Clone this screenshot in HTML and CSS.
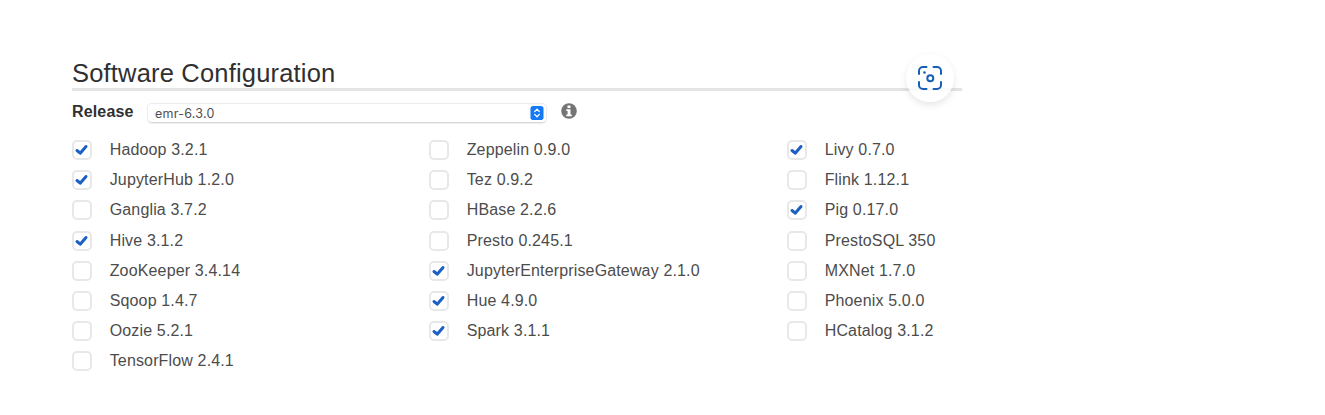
FILE: index.html
```html
<!DOCTYPE html>
<html lang="en">
<head>
<meta charset="utf-8">
<title>Software Configuration</title>
<link rel="stylesheet" href="styles.css">
</head>
<body>
<main class="panel">
  <h1 class="title">Software Configuration</h1>
  <button class="capture" aria-label="Visual search">
    <svg width="26" height="26" viewBox="0 0 26 26" fill="none" stroke="#1560b4" stroke-width="2" stroke-linecap="round">
      <path d="M9.500 2H6M2 9V6a4 4 0 0 1 4-4M16.500 2H20a4 4 0 0 1 4 4v3M24 17v3a4 4 0 0 1-4 4h-3.500M9.500 24H6a4 4 0 0 1-4-4v-3"/>
      <circle cx="13.300" cy="13.300" r="3"/>
      <circle cx="7.500" cy="7.500" r="1.300" fill="#1560b4" stroke="none"/>
    </svg>
  </button>
  <div class="release">
    <span class="release-label">Release</span>
    <div class="select">
      <span>emr-6.3.0</span>
      <svg class="stepper" width="14" height="14" viewBox="0 0 14 15">
        <rect width="14" height="15" rx="3" fill="#1579f5"/>
        <path d="M4.500 6 7 3.500 9.500 6M4.500 9 7 11.500 9.500 9" fill="none" stroke="#fff" stroke-width="1.400" stroke-linecap="round" stroke-linejoin="round"/>
      </svg>
    </div>
    <svg class="info" width="16" height="16" viewBox="0 0 16 16">
      <circle cx="8" cy="8" r="7.800" fill="#747474"/>
      <path d="M6.500 2.500h3v2.400h-3zM5.300 6.200h4.200v5.200h1.300v1.900H5.300v-1.900h1.300V8.100H5.300z" fill="#fff"/>
    </svg>
  </div>
  <div class="apps">
    <div class="column">
      <label class="app"><span class="box checked"></span>Hadoop 3.2.1</label>
      <label class="app"><span class="box checked"></span>JupyterHub 1.2.0</label>
      <label class="app"><span class="box"></span>Ganglia 3.7.2</label>
      <label class="app"><span class="box checked"></span>Hive 3.1.2</label>
      <label class="app"><span class="box"></span>ZooKeeper 3.4.14</label>
      <label class="app"><span class="box"></span>Sqoop 1.4.7</label>
      <label class="app"><span class="box"></span>Oozie 5.2.1</label>
      <label class="app"><span class="box"></span>TensorFlow 2.4.1</label>
    </div>
    <div class="column">
      <label class="app"><span class="box"></span>Zeppelin 0.9.0</label>
      <label class="app"><span class="box"></span>Tez 0.9.2</label>
      <label class="app"><span class="box"></span>HBase 2.2.6</label>
      <label class="app"><span class="box"></span>Presto 0.245.1</label>
      <label class="app"><span class="box checked"></span>JupyterEnterpriseGateway 2.1.0</label>
      <label class="app"><span class="box checked"></span>Hue 4.9.0</label>
      <label class="app"><span class="box checked"></span>Spark 3.1.1</label>
    </div>
    <div class="column">
      <label class="app"><span class="box checked"></span>Livy 0.7.0</label>
      <label class="app"><span class="box"></span>Flink 1.12.1</label>
      <label class="app"><span class="box checked"></span>Pig 0.17.0</label>
      <label class="app"><span class="box"></span>PrestoSQL 350</label>
      <label class="app"><span class="box"></span>MXNet 1.7.0</label>
      <label class="app"><span class="box"></span>Phoenix 5.0.0</label>
      <label class="app"><span class="box"></span>HCatalog 3.1.2</label>
    </div>
  </div>
</main>
<svg width="0" height="0" class="defs"><symbol id="tick" viewBox="0 0 20 20"><path d="M5 10.500 8.200 13.200 14 6.500"/></symbol></svg>
<script src="ticks.js"></script>
</body>
</html>
```
FILE: styles.css
```css
* { box-sizing: border-box; }
body {
  margin: 0;
  background: #fff;
  color: #4c4c4c;
  font-family: "Liberation Sans", Arial, sans-serif;
}
.panel {
  position: relative;
  width: 890px;
  margin-left: 72px;
  padding-top: 56px;
}
.title {
  height: 35px;
  margin: 0;
  border-bottom: 3px solid #e4e4e4;
  color: #303030;
  font-size: 25.500px;
  font-weight: 400;
  line-height: 34px;
  letter-spacing: 0.180px;
}
.capture {
  position: absolute;
  top: 54px;
  left: 834px;
  display: grid;
  place-items: center;
  width: 48px;
  height: 48px;
  padding: 0;
  border: 0;
  border-radius: 50%;
  background: rgba(255, 255, 255, 0.8);
  box-shadow: 0 3px 7px rgba(0, 0, 0, 0.1);
}
.release {
  display: flex;
  height: 44px;
  padding-top: 10px;
}
.release-label {
  width: 75px;
  color: #303030;
  font-size: 16px;
  font-weight: 700;
  line-height: 22px;
  letter-spacing: 0.150px;
}
.select {
  display: flex;
  align-items: center;
  justify-content: space-between;
  width: 400px;
  height: 20px;
  margin-top: 2px;
  padding: 0 2px 0 7px;
  border: 1px solid #ececec;
  border-bottom-color: #d8d8d8;
  border-radius: 5px;
  box-shadow: 0 1px 1px rgba(0, 0, 0, 0.07);
  color: #505050;
  font: 12.500px Inter, sans-serif;
  letter-spacing: 0.250px;
}
.info { margin: 2px 0 0 14px; }
.apps {
  display: grid;
  grid-template-columns: 357px 358px 175px;
}
.app {
  display: flex;
  align-items: center;
  height: 30.170px;
  font-size: 16px;
  letter-spacing: 0.150px;
  white-space: nowrap;
}
.box {
  flex: none;
  width: 20px;
  height: 20px;
  margin-right: 17.700px;
  border: 2px solid #e8e8e8;
  border-radius: 5px;
  background: #fff;
}
.tick {
  display: block;
  width: 20px;
  height: 20px;
  margin: -2px;
  fill: none;
  stroke: #1a5fc4;
  stroke-width: 3;
  stroke-linecap: round;
  stroke-linejoin: round;
}
.defs { display: block; }
```
FILE: ticks.js
```js
document.querySelectorAll('.checked').forEach(function (box) {
  box.innerHTML = '<svg class="tick"><use href="#tick"/></svg>';
});
```
